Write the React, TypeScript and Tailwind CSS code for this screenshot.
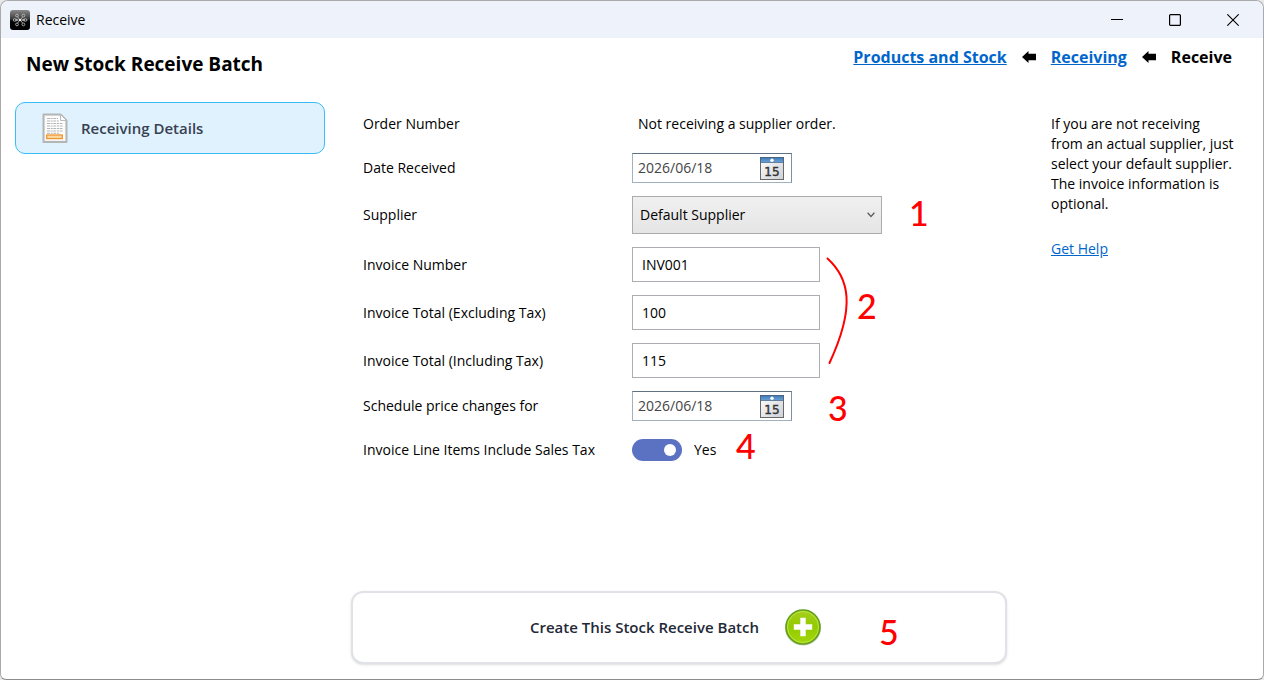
import React, { useState } from 'react';

const notes = [
  { text: '1', place: 'left-[558px] top-[94px]' },
  { text: '2', place: 'left-[506px] top-[187px]' },
  { text: '3', place: 'left-[477px] top-[289px]' },
  { text: '4', place: 'left-[385px] top-[327px]' },
  { text: '5', place: 'left-[528px] top-[513px]' },
];

function AppIcon() {
  return (
    <svg width="20" height="20" viewBox="0 0 20 20" aria-hidden="true">
      <defs>
        <linearGradient id="appShade" x1="0" y1="0" x2="0" y2="1">
          <stop offset="0" stopColor="#8a8a8a" />
          <stop offset="0.45" stopColor="#3a3a3a" />
          <stop offset="0.55" stopColor="#050505" />
          <stop offset="1" stopColor="#000" />
        </linearGradient>
      </defs>
      <rect width="20" height="20" rx="3" fill="url(#appShade)" />
      <g fill="none" stroke="#c4c4c4" strokeWidth="0.8">
        <circle cx="7" cy="5.6" r="1.4" />
        <circle cx="13.4" cy="5.6" r="1.4" />
        <circle cx="4.6" cy="10" r="1.3" />
        <circle cx="15.6" cy="10" r="1.3" />
        <circle cx="7" cy="14.4" r="1.4" />
        <circle cx="13.4" cy="14.4" r="1.4" />
        <path d="M7.8 6.9 9.2 9.2M12.6 6.9 11 9.2M6 10h2.5M11.7 10h2.5M7.8 13.1 9.2 10.8M12.6 13.1 11 10.8M5.6 8.9l2.2 1.1-2.2 1.1M14.6 8.9 12.4 10l2.2 1.1" />
      </g>
      <circle cx="10.1" cy="10" r="1.3" fill="#eee" />
    </svg>
  );
}

function DocumentIcon() {
  return (
    <svg width="26" height="31" viewBox="0 0 26 31" aria-hidden="true">
      <path d="M1.5 1.5h17l6 6v21.5h-23z" fill="#f4f4f4" stroke="#b3b5b6" strokeWidth="2" strokeLinejoin="round" />
      <path d="M3.5 3.5h14l5 5v18.5h-19z" fill="#fff" />
      <path
        d="M5 5.5h11M5 8h12M5 10.5h16M5 13h16M5 15.5h16M5 18h16M5 20.3h13"
        stroke="#b4b4b4"
        strokeWidth="1.1"
        strokeDasharray="3 0.7 2 0.6"
      />
      <path d="M18.5 1.5v6h6z" fill="#fdfdfd" stroke="#b9bbbc" />
      <rect x="4.7" y="22" width="15.6" height="3.6" fill="#fbd9a2" stroke="#f0962e" strokeWidth="1.3" />
    </svg>
  );
}

function CalendarIcon({ id }: { id: string }) {
  return (
    <svg width="24" height="23" viewBox="0 0 24 23" aria-hidden="true">
      <defs>
        <linearGradient id={`${id}-top`} x1="0" y1="0" x2="0" y2="1">
          <stop offset="0" stopColor="#3f79b4" />
          <stop offset="1" stopColor="#6ba3d8" />
        </linearGradient>
        <linearGradient id={`${id}-page`} x1="0" y1="0" x2="1" y2="1">
          <stop offset="0" stopColor="#fff" />
          <stop offset="1" stopColor="#cdd0d6" />
        </linearGradient>
      </defs>
      <rect x="0.5" y="0.5" width="23" height="22" fill={`url(#${id}-page)`} stroke="#686868" />
      <rect x="0.5" y="0.5" width="23" height="5" fill={`url(#${id}-top)`} stroke="#46627f" strokeWidth="0.7" />
      <circle cx="12" cy="3.2" r="1.7" fill="#fff" />
      <text x="12" y="18.5" textAnchor="middle" fontFamily="'DejaVu Sans', sans-serif" fontSize="12" fill="#333" stroke="#333" strokeWidth="0.4">
        15
      </text>
    </svg>
  );
}

function PlusIcon() {
  return (
    <svg width="38" height="38" viewBox="0 0 38 38" aria-hidden="true">
      <defs>
        <linearGradient id="plusShade" x1="0" y1="0" x2="0" y2="1">
          <stop offset="0" stopColor="#a5cf1d" />
          <stop offset="0.5" stopColor="#93ca00" />
          <stop offset="1" stopColor="#a2d80a" />
        </linearGradient>
      </defs>
      <ellipse cx="19" cy="20.5" rx="17.8" ry="17" fill="#c9ccc6" />
      <circle cx="19" cy="19" r="17" fill="url(#plusShade)" stroke="#61a11a" strokeWidth="1.6" />
      <circle cx="19" cy="19" r="15.5" fill="none" stroke="#bfe048" strokeWidth="1" />
      <path d="M16.3 9.8h5.4v6.5h6.5v5.4h-6.5v6.5h-5.4v-6.5H9.8v-5.4h6.5z" fill="#fff" />
    </svg>
  );
}

function BackArrow() {
  return (
    <svg width="14" height="12" viewBox="0 0 14 12" aria-hidden="true">
      <path d="M0 6 6.5 0v2.8H14v6.4H6.5V12z" fill="#000" />
    </svg>
  );
}

function DateField({ id, value, onChange }: { id: string; value: string; onChange: (v: string) => void }) {
  return (
    <div className="flex h-[30px] w-[160px] items-center justify-between border border-[#a3b0bd] border-t-[#5f7183] border-r-[#7f90a0] bg-white pr-[7px] pl-[5px]">
      <input
        id={id}
        type="text"
        value={value}
        onChange={(e) => onChange(e.target.value)}
        className="w-24 bg-transparent text-[#444] outline-none"
      />
      <button type="button" aria-label="Open calendar">
        <CalendarIcon id={`${id}-icon`} />
      </button>
    </div>
  );
}

export default function App() {
  const [form, setForm] = useState({
    received: '2026/06/18',
    supplier: 'Default Supplier',
    invoice: 'INV001',
    excl: '100',
    incl: '115',
    schedule: '2026/06/18',
    tax: true,
  });

  const set = (key: string, value: string | boolean) => setForm({ ...form, [key]: value });

  const inputClass = 'h-[35px] w-[188px] border border-[#abadb3] bg-white px-[9px] outline-none';

  return (
    <div className="min-h-screen flex bg-[#e9e9e9] font-['Open_Sans',sans-serif] text-[14px] leading-5 text-black">
      <div className="flex-1 flex flex-col overflow-hidden rounded-t-lg rounded-b-md border border-[#a9a9a9] border-b-[#8c8c8c] bg-white">

        {/* Title bar */}
        <header className="flex h-[37px] items-center justify-between bg-[#eef2fa] pl-[9px] pr-6">
          <div className="flex items-center gap-[6px]">
            <AppIcon />
            <span>Receive</span>
          </div>
          <div className="flex items-center gap-[46px]">
            <button type="button" aria-label="Minimize">
              <svg width="12" height="12" viewBox="0 0 12 12"><path d="M0 5.5h12" stroke="#000" /></svg>
            </button>
            <button type="button" aria-label="Maximize">
              <svg width="12" height="12" viewBox="0 0 12 12"><rect x="0.6" y="0.6" width="10.8" height="10.8" rx="1" fill="none" stroke="#000" strokeWidth="1.2" /></svg>
            </button>
            <button type="button" aria-label="Close">
              <svg width="12" height="12" viewBox="0 0 12 12"><path d="M0.3 0.3l11.4 11.4M11.7 0.3L0.3 11.7" stroke="#000" strokeWidth="1.1" /></svg>
            </button>
          </div>
        </header>

        {/* Heading and breadcrumbs */}
        <div className="flex h-16 items-start justify-between pl-[25px] pr-[31px]">
          <h1 className="text-[19px] leading-[52px] font-bold">New Stock Receive Batch</h1>
          <nav className="flex items-center gap-[15px] text-[16px] leading-[38px] font-bold">
            <a href="#products" className="text-[#0066cc] underline">Products and Stock</a>
            <BackArrow />
            <a href="#receiving" className="text-[#0066cc] underline">Receiving</a>
            <BackArrow />
            <span>Receive</span>
          </nav>
        </div>

        <div className="flex flex-1 pl-[14px]">
          <aside className="w-[310px]">
            <button type="button" className="flex h-[52px] w-full items-center gap-[13px] rounded-[10px] border border-[#38bdf8] bg-[#e0f2fe] pl-[26px] text-[15px] font-semibold text-[#374151]">
              <DocumentIcon />
              Receiving Details
            </button>
          </aside>

          <main className="relative ml-[26px] mr-11 flex flex-1 flex-col justify-between pb-[15px]">
            <form className="grid grid-cols-[269px_1fr] items-center gap-y-[13px] pl-3 pt-[6px]">
              <span>Order Number</span>
              <span className="h-8 pl-[6px] leading-8">Not receiving a supplier order.</span>

              <label htmlFor="received">Date Received</label>
              <DateField id="received" value={form.received} onChange={(v) => set('received', v)} />

              <label htmlFor="supplier">Supplier</label>
              <div className="relative w-[250px]">
                <select
                  id="supplier"
                  value={form.supplier}
                  onChange={(e) => set('supplier', e.target.value)}
                  className="block h-[38px] w-full appearance-none border border-[#acacac] bg-linear-to-b from-[#f0f0f0] to-[#e5e5e5] pl-[7px]"
                >
                  <option>Default Supplier</option>
                </select>
                <svg className="pointer-events-none absolute right-[7px] top-4" width="8" height="6" viewBox="0 0 8 6">
                  <path d="M0.6 0.8 4 4.4 7.4 0.8" fill="none" stroke="#606060" strokeWidth="1.4" />
                </svg>
              </div>

              <label htmlFor="invoice">Invoice Number</label>
              <input id="invoice" type="text" value={form.invoice} onChange={(e) => set('invoice', e.target.value)} className={inputClass} />

              <label htmlFor="excl">Invoice Total (Excluding Tax)</label>
              <input id="excl" type="text" value={form.excl} onChange={(e) => set('excl', e.target.value)} className={inputClass} />

              <label htmlFor="incl">Invoice Total (Including Tax)</label>
              <input id="incl" type="text" value={form.incl} onChange={(e) => set('incl', e.target.value)} className={inputClass} />

              <label htmlFor="schedule">Schedule price changes for</label>
              <DateField id="schedule" value={form.schedule} onChange={(v) => set('schedule', v)} />

              <label htmlFor="tax">Invoice Line Items Include Sales Tax</label>
              <div className="flex h-8 items-center gap-3">
                <input
                  id="tax"
                  type="checkbox"
                  checked={form.tax}
                  onChange={(e) => set('tax', e.target.checked)}
                  className="flex h-[22px] w-[50px] appearance-none items-center rounded-full bg-gray-400 px-[6px] before:size-3 before:rounded-full before:bg-white checked:justify-end checked:bg-[#5b72c3]"
                />
                <span>{form.tax ? 'Yes' : 'No'}</span>
              </div>
            </form>

            <button type="button" className="flex h-[73px] items-center justify-center gap-[25px] rounded-xl border-2 border-[#e1e2e8] bg-white pb-[2px] pr-[6px] text-[15px] font-semibold text-[#1f2937] shadow-sm">
              Create This Stock Receive Batch
              <PlusIcon />
            </button>

            {/* Red step markers */}
            {notes.map((note) => (
              <span key={note.text} className={`pointer-events-none absolute font-[Lato] text-[34px] leading-[34px] font-medium text-[#ff0000] ${note.place}`}>
                {note.text}
              </span>
            ))}
            <svg className="pointer-events-none absolute left-[474px] top-[154px]" width="26" height="110" viewBox="0 0 26 110" aria-hidden="true">
              <path d="M2.5 2.5C24 22 31 50 4.500 107" fill="none" stroke="#ff0000" strokeWidth="2" strokeLinecap="round" />
            </svg>
          </main>

          <aside className="w-[212px] pr-7 pt-3">
            <p>If you are not receiving from an actual supplier, just select your default supplier. The invoice information is optional.</p>
            <a href="#help" className="mt-[25px] inline-block text-[#0066cc] underline">Get Help</a>
          </aside>
        </div>
      </div>
    </div>
  );
}
